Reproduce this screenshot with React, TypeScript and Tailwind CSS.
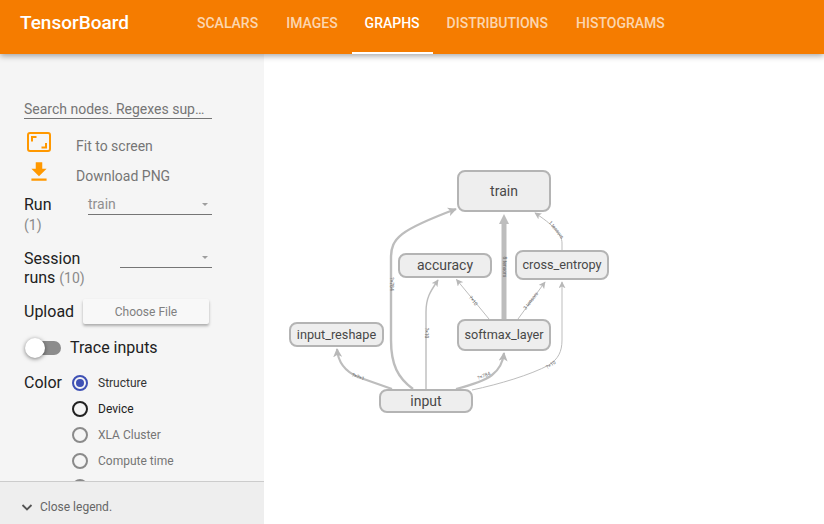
const tabs = ["Scalars", "Images", "Graphs", "Distributions", "Histograms"];

const colorModes = [
  { label: "Structure", ring: "border-[#3f51b5]", text: "text-[#333333]", on: true },
  { label: "Device", ring: "border-[#212121]", text: "text-[#212121]", on: false },
  { label: "XLA Cluster", ring: "border-[#8a8a8a]", text: "text-[#757575]", on: false },
  { label: "Compute time", ring: "border-[#8a8a8a]", text: "text-[#757575]", on: false },
  { label: "", ring: "border-[#8a8a8a]", text: "text-[#757575]", on: false },
];

function Header() {
  return (
    <header className="relative z-10 flex h-[54px] shrink-0 bg-[#f57c00] pl-5 text-white shadow-[0_2px_6px_rgba(0,0,0,0.35)]">
      <h1 className="mr-[54px] text-[19px] leading-[45px] font-medium">TensorBoard</h1>
      <nav className="flex">
        {tabs.map((tab) => (
          <div
            key={tab}
            className={
              tab === "Graphs"
                ? "h-[54px] border-b-2 border-white px-[13px] text-[14px] leading-[46px] font-medium uppercase"
                : "h-[54px] px-[14px] text-[14px] leading-[46px] font-medium uppercase text-white/70"
            }
          >
            {tab}
          </div>
        ))}
      </nav>
    </header>
  );
}

function SelectBox({ value, className }: { value?: string; className: string }) {
  return (
    <div className={`flex h-5 items-center justify-between border-b border-[#757575] pr-1 text-[14px] text-[#8f8f8f] ${className}`}>
      <span>{value}</span>
      <span className="h-0 w-0 border-x-[3px] border-t-[3px] border-x-transparent border-t-[#9e9e9e]" />
    </div>
  );
}

function Sidebar() {
  return (
    <aside className="flex w-[264px] shrink-0 flex-col bg-[#f5f5f5]">
      <div className="flex-1 overflow-hidden pt-[45px] pl-6">
        <div className="h-5 w-[188px] truncate border-b border-[#757575] text-[14px] leading-[20px] text-[#757575]">
          Search nodes. Regexes supported.
        </div>

        <div className="mt-3 flex h-[30px] items-center text-[14px] text-[#757575]">
          <svg className="mt-[-9px] ml-[3px] h-5 w-6" viewBox="0 0 24 20" fill="none" stroke="#ff9800" strokeWidth="2">
            <rect x="1" y="1" width="22" height="18" rx="2" />
            <path d="M5 9.5V5h4.5M19 11v4.5h-4.5" />
          </svg>
          <span className="ml-[25px]">Fit to screen</span>
        </div>
        <div className="flex h-[30px] items-center text-[14px] text-[#757575]">
          <svg className="mt-[-9px] ml-[2px] h-[26px] w-[26px]" viewBox="0 0 24 24" fill="#ff9800">
            <path d="M19 9h-4V3H9v6H5l7 7 7-7zM5 18v2h14v-2H5z" />
          </svg>
          <span className="ml-6">Download PNG</span>
        </div>

        <div className="mt-1 flex w-[188px] items-start">
          <div className="w-16 text-[16px] leading-[19px] text-[#212121]">
            Run
            <div className="mt-[3px] text-[14px] leading-[16px] text-[#8a8a8a]">(1)</div>
          </div>
          <SelectBox value="train" className="flex-1" />
        </div>

        <div className="mt-4 flex w-[188px] items-start">
          <div className="w-24 text-[16px] leading-[19px] text-[#212121]">
            <div>Session</div>
            <div>
              runs <span className="text-[14px] text-[#8a8a8a]">(10)</span>
            </div>
          </div>
          <SelectBox className="mt-[-1px] flex-1" />
        </div>

        <div className="mt-[11px] flex items-center">
          <span className="w-[59px] pt-px text-[16px] text-[#212121]">Upload</span>
          <div className="flex h-[25px] w-[126px] items-center justify-center rounded-[2px] bg-[#f8f8f8] text-[12px] text-[#808080] shadow-[0_2px_3px_rgba(0,0,0,0.3)]">
            Choose File
          </div>
        </div>

        <div className="mt-[14px] flex h-5 items-center">
          <div className="relative ml-[3px] h-[14px] w-[34px] rounded-full bg-[#8c8c8c]">
            <div className="absolute top-[-3px] left-[-2px] h-5 w-5 rounded-full bg-white shadow-[0_1px_4px_rgba(0,0,0,0.5)]" />
          </div>
          <span className="ml-[9px] text-[16px] text-[#212121]">Trace inputs</span>
        </div>

        <div className="mt-[12px] flex">
          <span className="w-12 text-[16px] leading-[26px] text-[#212121]">Color</span>
          <div className="flex flex-col">
            {colorModes.map((mode) => (
              <div key={mode.label} className={`flex h-[26px] items-center text-[12px] ${mode.text}`}>
                <span className={`flex h-4 w-4 items-center justify-center rounded-full border-2 ${mode.ring}`}>
                  {mode.on && <span className="h-2 w-2 rounded-full bg-[#3f51b5]" />}
                </span>
                <span className="ml-[10px]">{mode.label}</span>
              </div>
            ))}
          </div>
        </div>
      </div>

      <div className="flex h-[43px] shrink-0 items-center border-t border-[#cccccc] bg-[#eeeeee] pt-[8px] pl-[21px] text-[12px] text-[#666666]">
        <svg className="h-3 w-3" viewBox="0 0 12 12" fill="none" stroke="#555555" strokeWidth="1.8">
          <path d="M1.5 4 6 8.5 10.5 4" />
        </svg>
        <span className="ml-[7px]">Close legend.</span>
      </div>
    </aside>
  );
}

function Node({ label, className }: { label: string; className: string }) {
  return (
    <div
      className={`absolute flex items-center justify-center rounded-[8px] border-2 border-[#b4b4b4] bg-[#eeeeee] text-[#484848] ${className}`}
    >
      {label}
    </div>
  );
}

const edges = [
  { d: "M413 389C398 378 391 365 391 340L391 258C391 238 400 230 456 209", w: 2.4, head: "url(#arrow-big)" },
  { d: "M426 389L426 312C426 298 430 292 438 280", w: 1.4, head: "url(#arrow-small)" },
  { d: "M392 389L358 377C344 371 338 362 337 349", w: 2.2, head: "url(#arrow-big)" },
  { d: "M456 389C472 385 484 381 492 375C500 369 503 362 504 353", w: 2.2, head: "url(#arrow-big)" },
  { d: "M472 390C500 384 530 375 549 365C558 359 562 352 562 340L562 282", w: 1, head: "url(#arrow-small)" },
  { d: "M489 319L456.5 279.5", w: 1, head: "url(#arrow-small)" },
  { d: "M518 319L545 282", w: 1, head: "url(#arrow-small)" },
  { d: "M562 250L562 243C562 234 552 224 535 213", w: 1, head: "url(#arrow-small)" },
];

const edgeLabels = [
  { t: "?×784", x: 391, y: 284, r: 90 },
  { t: "?×10", x: 426, y: 333, r: 90 },
  { t: "?×?×1", x: 358, y: 377, r: 20 },
  { t: "?×784", x: 484, y: 376, r: -22 },
  { t: "?×10", x: 551, y: 365, r: -32 },
  { t: "?×10", x: 473, y: 301, r: 52 },
  { t: "3 tensors", x: 531, y: 301, r: -52 },
  { t: "8 tensors", x: 504, y: 267, r: 90 },
  { t: "1 tensors", x: 556, y: 230, r: 52 },
];

function Graph() {
  return (
    <main className="relative flex-1 overflow-hidden bg-white">
      <svg className="absolute inset-0 h-full w-full" viewBox="264 54 560 470" fill="none">
        <defs>
          <marker id="arrow-big" viewBox="0 0 10 10" refX="9" refY="5" markerWidth="9" markerHeight="9" markerUnits="userSpaceOnUse" orient="auto">
            <path d="M0 0 10 5 0 10 2.5 5z" fill="#b8b8b8" />
          </marker>
          <marker id="arrow-small" viewBox="0 0 10 10" refX="9" refY="5" markerWidth="7" markerHeight="7" markerUnits="userSpaceOnUse" orient="auto">
            <path d="M0 0 10 5 0 10 2.5 5z" fill="#b8b8b8" />
          </marker>
        </defs>
        {edges.map((edge) => (
          <path key={edge.d} d={edge.d} stroke="#bdbdbd" strokeWidth={edge.w} markerEnd={edge.head} />
        ))}
        <path d="M504 319L504 222" stroke="#bdbdbd" strokeWidth="5" />
        <path d="M504 214 509 224 499 224z" fill="#bdbdbd" />
        {edgeLabels.map((label) => (
          <text
            key={label.x}
            x={label.x}
            y={label.y}
            transform={`rotate(${label.r} ${label.x} ${label.y})`}
            fontSize="5"
            textAnchor="middle"
            dominantBaseline="middle"
            fill="#666666"
          >
            {label.t}
          </text>
        ))}
      </svg>
      <Node label="train" className="top-[116px] left-[193px] h-[42px] w-[94px] text-[14px]" />
      <Node label="accuracy" className="top-[199px] left-[134px] h-[25px] w-[94px] text-[14px]" />
      <Node label="cross_entropy" className="top-[196px] left-[251px] h-[30px] w-[94px] text-[12.7px]" />
      <Node label="input_reshape" className="top-[268px] left-[25px] h-[25px] w-[95px] text-[12.7px]" />
      <Node label="softmax_layer" className="top-[265px] left-[193px] h-[32px] w-[94px] text-[12.7px]" />
      <Node label="input" className="top-[335px] left-[115px] h-[24px] w-[94px] text-[14px]" />
    </main>
  );
}

export default function App() {
  return (
    <div className="flex h-screen w-full flex-col overflow-hidden bg-white font-['Roboto',sans-serif]">
      <Header />
      <div className="flex min-h-0 flex-1">
        <Sidebar />
        <Graph />
      </div>
    </div>
  );
}
